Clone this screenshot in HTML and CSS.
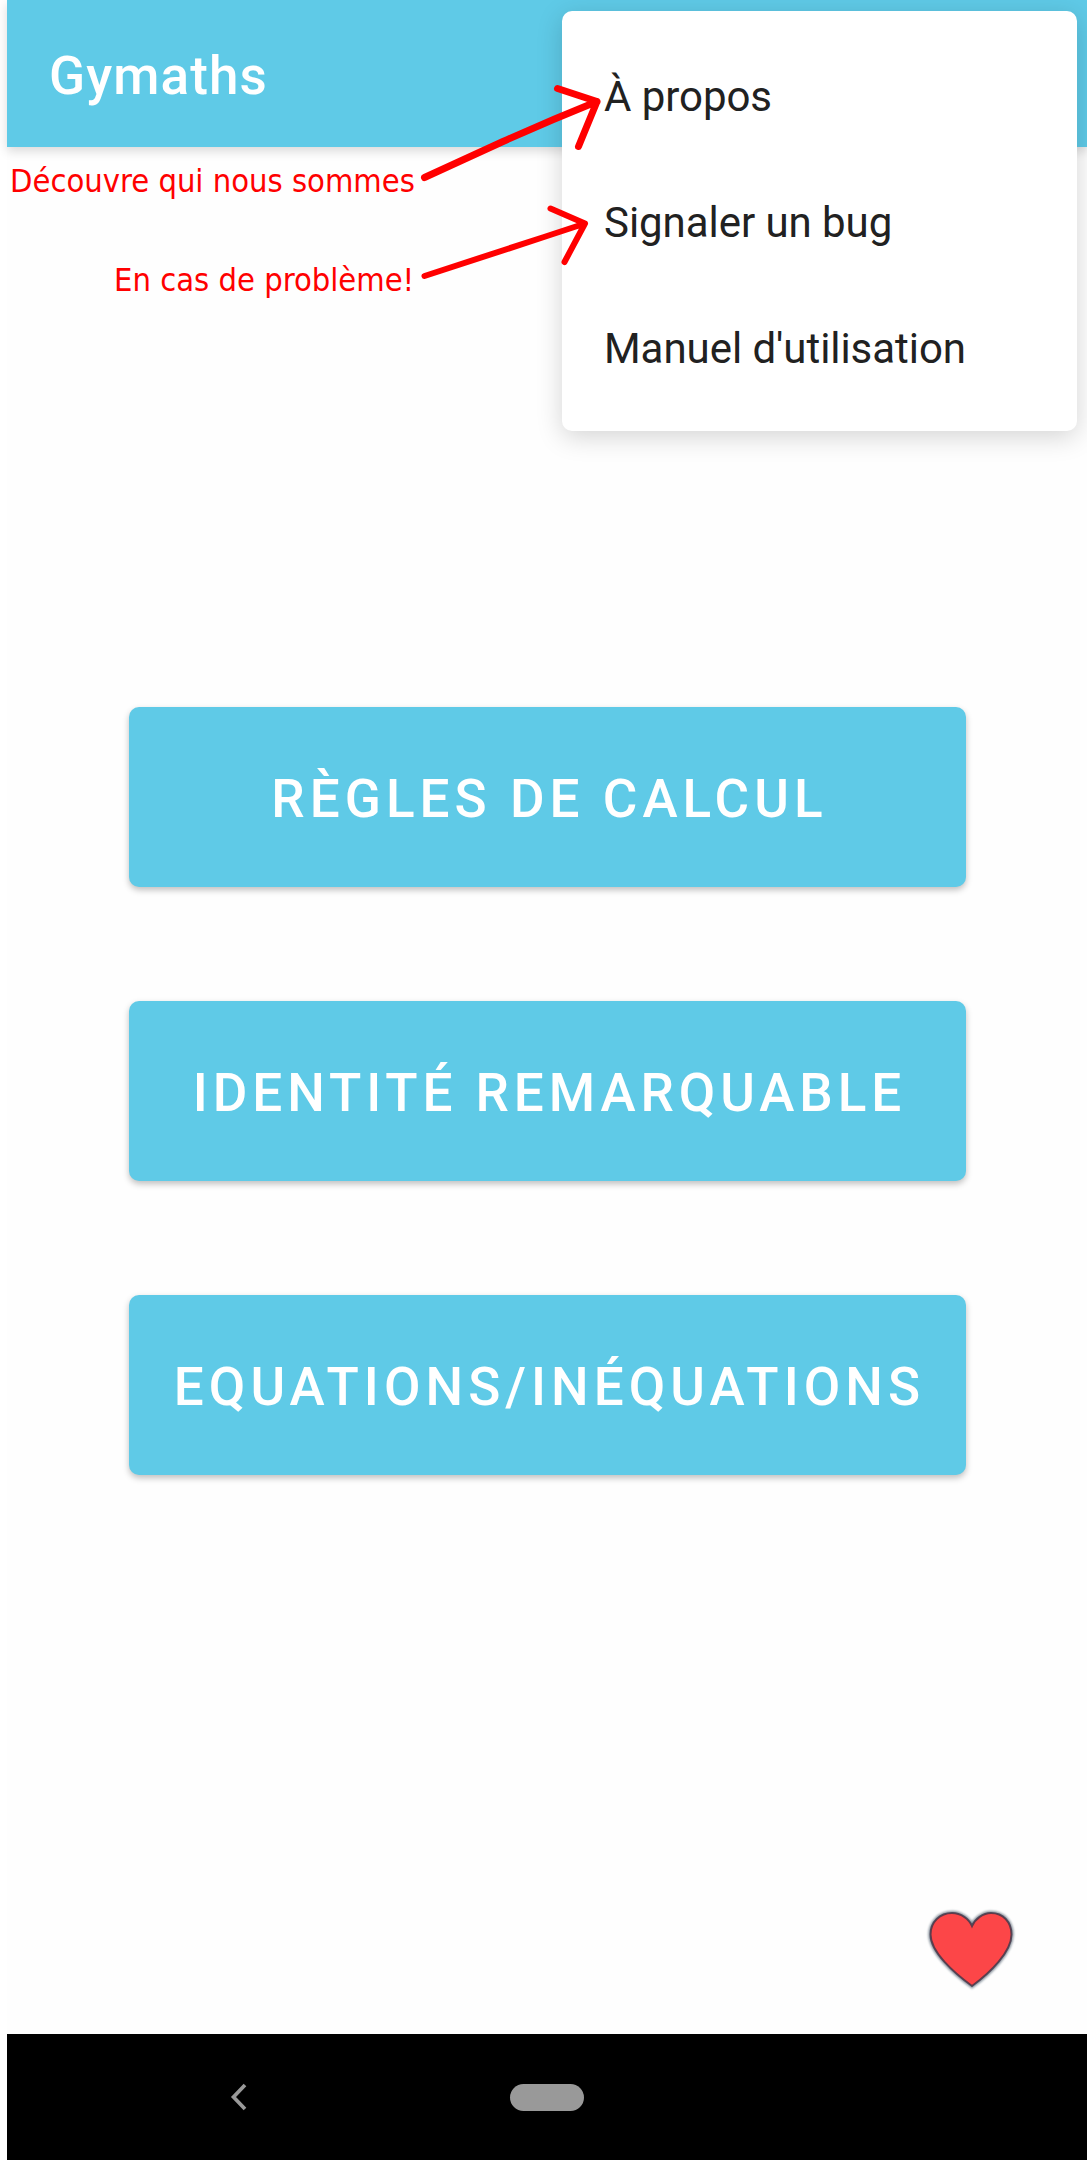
FILE: index.html
```html
<!DOCTYPE html>
<html lang="fr">
<head>
<meta charset="utf-8">
<title>Gymaths</title>
<link rel="stylesheet" href="styles.css">
</head>
<body>
<div class="screen">
  <header class="app-bar"><h1 class="app-title">Gymaths</h1></header>
  <main class="content">
    <button class="topic">RÈGLES DE CALCUL</button>
    <button class="topic topic-tight">IDENTITÉ REMARQUABLE</button>
    <button class="topic">EQUATIONS/INÉQUATIONS</button>
  </main>
  <div class="favourite">
    <svg class="heart" width="84" height="78" viewBox="0 0 84 78">
      <path class="heart-halo" d="M43 75 C25 62 1.500 41 1.500 23.500 C1.500 11 11 2 23 2 C32 2 40 8 43 15 C46 8 54 2 62 2 C74 2 82.500 11 82.500 23.500 C82.500 41 61 62 43 75Z"/>
      <path class="heart-shape" d="M43 75 C25 62 1.500 41 1.500 23.500 C1.500 11 11 2 23 2 C32 2 40 8 43 15 C46 8 54 2 62 2 C74 2 82.500 11 82.500 23.500 C82.500 41 61 62 43 75Z"/>
    </svg>
  </div>
  <nav class="nav-bar">
    <svg class="back" width="20" height="32" viewBox="0 0 20 32"><path d="M16 4L4.500 16L16 28"/></svg>
    <span class="home"></span>
  </nav>
</div>
<div class="menu">
  <div class="menu-item">À propos</div>
  <div class="menu-item">Signaler un bug</div>
  <div class="menu-item">Manuel d'utilisation</div>
</div>
<p class="note note-about">Découvre qui nous sommes</p>
<p class="note note-bug">En cas de problème!</p>
<svg class="arrows" width="620" height="300" viewBox="0 0 620 300">
  <path class="arrow arrow-about" d="M424.500 177.500L503 141.500Q551 120 597 101.500M557.500 88.500L597 101.500L578.500 146.500"/>
  <path class="arrow arrow-bug" d="M424.500 276L544 237L585 223.500M550.500 208.500L585 223.500L564.500 262"/>
</svg>
</body>
</html>
```
FILE: styles.css
```css
* { box-sizing: border-box; }
body {
  margin: 0;
  position: relative;
  height: 2160px;
  overflow: hidden;
  background: #fff;
  font-family: Roboto, sans-serif;
}
.screen {
  display: flex;
  flex-direction: column;
  height: 2160px;
  margin-left: 7px;
  background: #fefefe;
}
.app-bar {
  height: 147px;
  padding-left: 42px;
  display: flex;
  align-items: center;
  background: #5fcae7;
  box-shadow: 0 4px 10px rgba(0, 0, 0, .15);
}
.app-title {
  margin: 5px 0 0;
  color: #fff;
  font-size: 53px;
  font-weight: 500;
  line-height: 62px;
  letter-spacing: 1.100px;
}
.content {
  flex: 1;
  display: flex;
  flex-direction: column;
  align-items: center;
  gap: 114px;
  padding: 560px 0 0;
}
.topic {
  width: 837px;
  height: 180px;
  padding: 4px 0 0 5px;
  border: 0;
  border-radius: 10px;
  background: #5fcae7;
  box-shadow: 0 3px 6px rgba(0, 0, 0, .25);
  color: #fff;
  font: 500 53px/62px Roboto, sans-serif;
  letter-spacing: 5.050px;
  white-space: nowrap;
}
.topic-tight { letter-spacing: 4.930px; }
.favourite {
  display: flex;
  justify-content: flex-end;
  padding: 0 74px 45px 0;
}
.heart { display: block; overflow: visible; }
.heart-halo { fill: none; stroke: #455565; stroke-width: 4.500; opacity: .6; filter: blur(.8px); }
.heart-shape { fill: #fc4648; stroke: #3d3547; stroke-width: 2; stroke-opacity: .8; }
.nav-bar {
  height: 126px;
  display: flex;
  align-items: center;
  padding-left: 222px;
  gap: 261px;
  background: #000;
}
.back path { fill: none; stroke: #999; stroke-width: 3.700; }
.home {
  width: 74px;
  height: 27px;
  border-radius: 14px;
  background: #999;
}
.menu {
  position: absolute;
  left: 562px;
  top: 11px;
  width: 515px;
  height: 420px;
  padding: 23px 0 19px;
  border-radius: 10px;
  background: #fff;
  box-shadow: 0 6px 26px rgba(0, 0, 0, .17);
}
.menu-item {
  height: 126px;
  padding: 0 42px;
  color: #212121;
  font-size: 42px;
  line-height: 126px;
  letter-spacing: -.05px;
}
.note {
  position: absolute;
  margin: 0;
  color: #f00;
  font: 32.400px/38px "DejaVu Sans Condensed", "DejaVu Sans", sans-serif;
  font-stretch: condensed;
  white-space: nowrap;
}
.note-about { left: 10px; top: 162px; }
.note-bug { left: 114px; top: 261px; }
.arrows { position: absolute; left: 0; top: 0; }
.arrow {
  fill: none;
  stroke: #f00;
  stroke-linecap: round;
  stroke-linejoin: round;
}
.arrow-about { stroke-width: 7; }
.arrow-bug { stroke-width: 6; }
```
